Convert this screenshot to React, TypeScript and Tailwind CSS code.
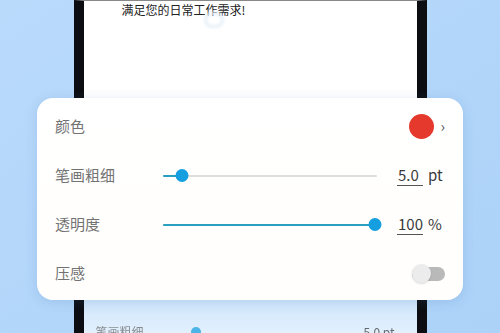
const font = { fontFamily: '"Noto Sans CJK SC", "Noto Sans", sans-serif' };

const Slider = ({ value }: { value: number }) => {
  return (
    <div className="relative w-[214px] h-[14px] flex items-center">
      <div className="w-full h-[2px] bg-[#dedede] rounded-full" />
      <div className="absolute left-0 h-[2px] bg-[#2a9fc0] rounded-full" style={{ width: `${value}%` }} />
      <div
        className="absolute w-[13px] h-[13px] rounded-full bg-[#159fe0] -translate-x-1/2"
        style={{ left: `${value}%` }}
      />
    </div>
  );
};

const Row = ({ label, children }: { label: string; children?: React.ReactNode }) => (
  <div className="flex items-center h-[49px]">
    <span className="w-[108px] text-[15px] text-[#737373]">{label}</span>
    {children}
  </div>
);

const Value = ({ num, unit }: { num: string; unit: string }) => (
  <div className="flex items-baseline ml-[20px] text-[15px] text-[#3a3a3a]">
    <span className="w-[26px] border-b border-[#555] leading-[20px] pl-[1px]">{num}</span>
    <span className="ml-[5px] leading-[20px]">{unit}</span>
  </div>
);

export default function App() {
  return (
    <div
      className="relative w-[500px] h-[333px] overflow-hidden bg-gradient-to-br from-[#b9dafb] to-[#acd2f8]"
      style={font}
    >
      <div className="mx-auto w-[353px] h-full border-x-[10px] border-[#0b0d12] border-t border-t-[#888] flex flex-col bg-gradient-to-b from-white via-white to-[#d3e8fc]">
        <div className="relative pl-[38px] pt-[1px] text-[12px] text-[#222] leading-[16px]">
          满足您的日常工作需求!
          <div className="absolute left-[120px] top-[11px] w-[20px] h-[16px] rounded-full border-[3px] border-[#e6f0f8] blur-[1.5px]" />
        </div>
        <div className="flex-1" />
        <div className="h-[36px] bg-gradient-to-b from-[#c8e2fb] to-[#eaf4fe] flex items-end px-[12px] opacity-70">
          <div className="flex items-center w-full translate-y-[8px] text-[12px] text-[#666]">
            <span className="w-[95px]">笔画粗细</span>
            <div className="w-[10px] h-[10px] rounded-full bg-[#159fe0]" />
            <span className="ml-auto mr-[10px] text-[#333]">5.0 pt</span>
          </div>
        </div>
      </div>

      <div className="absolute left-[37px] top-[98px] w-[426px] h-[202px] rounded-[16px] bg-gradient-to-b from-white to-[#fffefc] shadow-[0_2px_12px_rgba(60,110,170,0.18)] pl-[18px] pr-[18px] pt-[4px]">
        <Row label="颜色">
          <div className="ml-auto flex items-center">
            <div className="w-[25px] h-[25px] rounded-full bg-[#e5392d]" />
            <span className="ml-[6px] text-[15px] text-[#555] leading-none -translate-y-[1px]">›</span>
          </div>
        </Row>
        <Row label="笔画粗细">
          <Slider value={9} />
          <Value num="5.0" unit="pt" />
        </Row>
        <Row label="透明度">
          <Slider value={99} />
          <Value num="100" unit="%" />
        </Row>
        <Row label="压感">
          <div className="ml-auto relative w-[33px] h-[19px] flex items-center">
            <div className="w-full h-[14px] rounded-full bg-[#b9b9b9]" />
            <div className="absolute left-0 w-[19px] h-[19px] rounded-full bg-[#ececec] shadow-[0_1px_2px_rgba(0,0,0,0.15)]" />
          </div>
        </Row>
      </div>
    </div>
  );
}
